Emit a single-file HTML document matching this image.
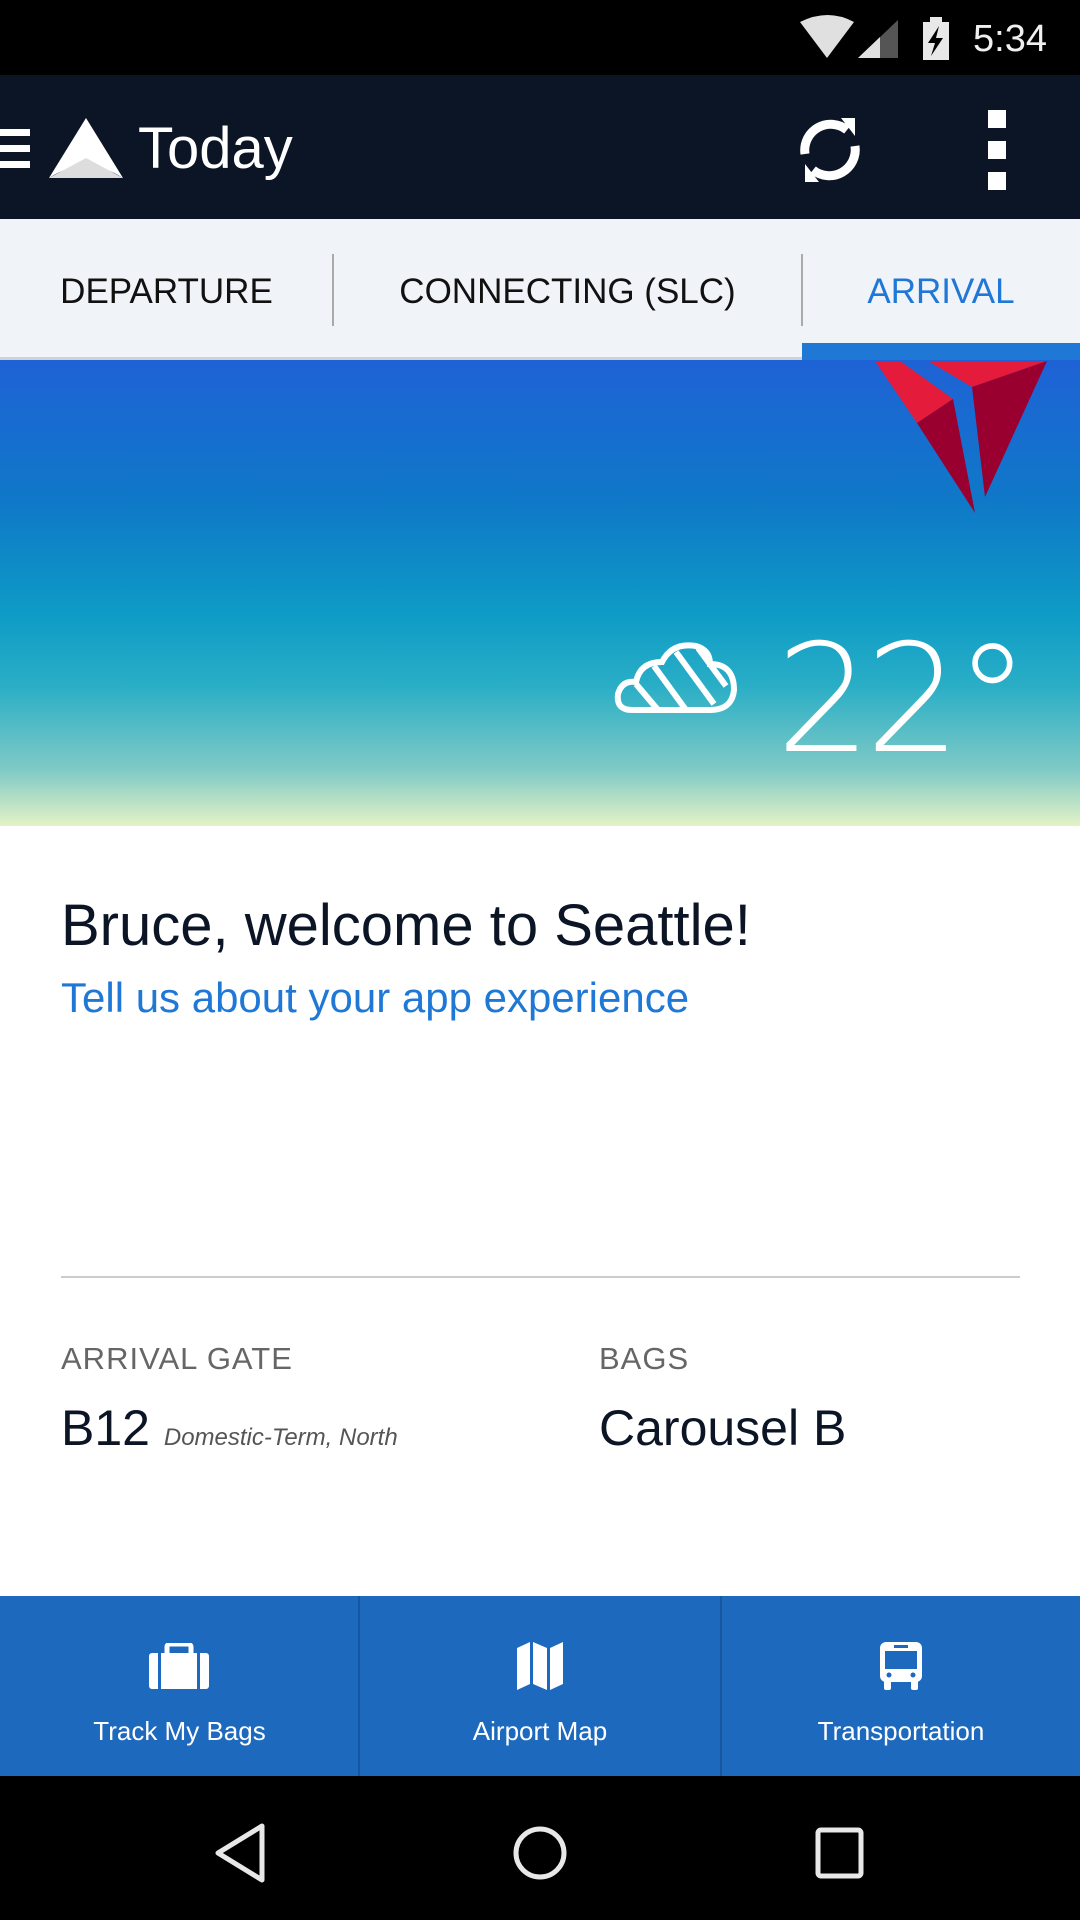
<!DOCTYPE html>
<html><head><meta charset="utf-8"><style>
*{margin:0;padding:0;box-sizing:border-box}
body{width:1080px;height:1920px;overflow:hidden;font-family:"Liberation Sans",sans-serif;background:#fff;position:relative}
.a{position:absolute}
</style></head><body>
<div class="a" style="left:0;top:0;width:1080px;height:75px;background:#000"></div>
<svg class="a" style="left:790px;top:14px" width="180" height="50" viewBox="0 0 180 50">
<path d="M10 8 Q38 -6 64 8 L37 44 Z" fill="#e0e0e0"/>
<path d="M68 44 L108 6 L108 44 Z" fill="#555"/><path d="M68 44 L90 23 L90 44Z" fill="#e0e0e0"/>
<rect x="133" y="8" width="26" height="38" fill="#e8e8e8"/><rect x="140" y="3" width="12" height="6" fill="#e8e8e8"/>
<path d="M149 12 L138 29 L145 29 L141 42 L153 24 L146 24 Z" fill="#000"/>
</svg>
<div class="a" style="left:973px;top:14px;font-size:38px;color:#f0f0f0;line-height:50px">5:34</div>

<div class="a" style="left:0;top:75px;width:1080px;height:144px;background:#0b1526"></div>
<div class="a" style="left:0;top:129px;width:30px;height:7px;background:#fff"></div>
<div class="a" style="left:0;top:145px;width:30px;height:7px;background:#fff"></div>
<div class="a" style="left:0;top:161px;width:30px;height:7px;background:#fff"></div>
<svg class="a" style="left:49px;top:118px" width="74" height="62" viewBox="0 0 74 62"><path d="M37 0 L74 60 Q37 36 0 60 Z" fill="#fff"/><path d="M37 40 L0 60 L74 60Z" fill="#ddd"/></svg>
<div class="a" style="left:138px;top:116px;font-size:58px;color:#fff;line-height:66px">Today</div>
<svg class="a" style="left:795px;top:112px" width="70" height="76" viewBox="0 0 70 76" fill="none" stroke="#fff" stroke-width="9">
<path d="M10 42 A26 26 0 0 1 52 18"/><path d="M60 34 A26 26 0 0 1 18 58"/>
<path d="M46 6 L60 6 L60 24 Z" fill="#fff" stroke="none"/><path d="M24 70 L10 70 L10 52Z" fill="#fff" stroke="none"/></svg>
<div class="a" style="left:988px;top:110px;width:18px;height:18px;background:#fff"></div>
<div class="a" style="left:988px;top:141px;width:18px;height:18px;background:#fff"></div>
<div class="a" style="left:988px;top:172px;width:18px;height:18px;background:#fff"></div>

<div class="a" style="left:0;top:219px;width:1080px;height:141px;background:#f0f3f8"></div>
<div class="a" style="left:0;top:357px;width:802px;height:3px;background:#cfd2d8"></div>
<div class="a" style="left:332px;top:254px;width:2px;height:72px;background:#aaa"></div>
<div class="a" style="left:801px;top:254px;width:2px;height:72px;background:#aaa"></div>
<div class="a" style="left:802px;top:343px;width:278px;height:17px;background:#1f78d6"></div>
<div class="a" style="left:0;top:270px;width:333px;text-align:center;font-size:35px;line-height:44px;color:#111">DEPARTURE</div>
<div class="a" style="left:333px;top:270px;width:469px;text-align:center;font-size:35px;line-height:44px;color:#111">CONNECTING (SLC)</div>
<div class="a" style="left:802px;top:270px;width:278px;text-align:center;font-size:35px;line-height:44px;color:#1f78d6">ARRIVAL</div>

<div class="a" style="left:0;top:360px;width:1080px;height:466px;background:linear-gradient(#1f62d6 0%,#0f78c8 30%,#0e9cc6 55%,#2aaec6 70%,#80cac6 88%,#e4f2c6 100%)"></div>
<svg class="a" style="left:0;top:0" width="1080" height="520" viewBox="0 0 1080 520">
<path d="M875 361 L900 361 L953 399 L917 423 Z" fill="#e41b3a"/>
<path d="M928 361 L1047 361 L972 387 Z" fill="#e41b3a"/>
<path d="M972 387 L1047 361 L985 497 Z" fill="#990030"/>
<path d="M917 423 L953 399 L975 513 Z" fill="#990030"/></svg>
<svg class="a" style="left:614px;top:640px" width="124" height="74" viewBox="0 0 124 74" fill="none" stroke="#fff" stroke-width="6">
<path d="M18 70 Q2 70 4 54 Q8 40 22 42 Q26 22 48 22 Q58 2 82 6 Q96 10 96 24 Q120 24 120 50 Q118 70 96 70 Z"/>
<path d="M22 44 L44 70 M40 26 L72 70 M62 12 L100 64 M84 8 L112 46" /></svg>
<div class="a" style="left:776px;top:620px;font-size:150px;color:#fff;line-height:160px;letter-spacing:-6px;font-family:'DejaVu Sans','Liberation Sans',sans-serif;font-weight:200">22°</div>

<div class="a" style="left:61px;top:891px;font-size:58px;color:#0b1526;line-height:70px">Bruce, welcome to Seattle!</div>
<div class="a" style="left:61px;top:974px;font-size:42px;color:#1f78d6;line-height:48px">Tell us about your app experience</div>
<div class="a" style="left:61px;top:1276px;width:959px;height:2px;background:#ccc"></div>
<div class="a" style="left:61px;top:1339px;font-size:31px;color:#666;line-height:40px;letter-spacing:1px">ARRIVAL GATE</div>
<div class="a" style="left:599px;top:1339px;font-size:31px;color:#666;line-height:40px;letter-spacing:1px">BAGS</div>
<div class="a" style="left:61px;top:1398px;font-size:50px;color:#0b1526;line-height:60px">B12 <span style="font-size:24px;font-style:italic;color:#555">Domestic-Term, North</span></div>
<div class="a" style="left:599px;top:1398px;font-size:50px;color:#0b1526;line-height:60px">Carousel B</div>

<div class="a" style="left:0;top:1596px;width:1080px;height:180px;background:#1c69bd"></div>
<div class="a" style="left:358px;top:1596px;width:2px;height:180px;background:#17579e"></div>
<div class="a" style="left:720px;top:1596px;width:2px;height:180px;background:#17579e"></div>
<svg class="a" style="left:149px;top:1643px" width="60" height="46" viewBox="0 0 60 46"><rect x="0" y="10" width="60" height="36" rx="3" fill="#fff"/><rect x="18" y="1" width="24" height="12" rx="3" fill="none" stroke="#fff" stroke-width="5"/><rect x="9" y="10" width="3" height="36" fill="#1c69bd"/><rect x="48" y="10" width="3" height="36" fill="#1c69bd"/></svg>
<svg class="a" style="left:517px;top:1642px" width="46" height="48" viewBox="0 0 46 48"><path d="M0 6 L13 0 L13 42 L0 48Z M16 0 L30 6 L30 48 L16 42Z M33 6 L46 0 L46 42 L33 48Z" fill="#fff"/></svg>
<svg class="a" style="left:880px;top:1642px" width="42" height="48" viewBox="0 0 42 48"><rect x="0" y="0" width="42" height="40" rx="6" fill="#fff"/><rect x="5" y="9" width="32" height="18" fill="#1c69bd"/><rect x="14" y="3" width="14" height="3" fill="#1c69bd"/><circle cx="9" cy="33" r="2.5" fill="#1c69bd"/><circle cx="33" cy="33" r="2.5" fill="#1c69bd"/><rect x="4" y="38" width="7" height="10" rx="2" fill="#fff"/><rect x="31" y="38" width="7" height="10" rx="2" fill="#fff"/></svg>
<div class="a" style="left:0;top:1714px;width:359px;text-align:center;font-size:26px;color:#fff;line-height:34px">Track My Bags</div>
<div class="a" style="left:360px;top:1714px;width:360px;text-align:center;font-size:26px;color:#fff;line-height:34px">Airport Map</div>
<div class="a" style="left:722px;top:1714px;width:358px;text-align:center;font-size:26px;color:#fff;line-height:34px">Transportation</div>

<div class="a" style="left:0;top:1776px;width:1080px;height:144px;background:#000"></div>
<svg class="a" style="left:0;top:1776px" width="1080" height="144" viewBox="0 0 1080 144" fill="none" stroke="#e8e8e8" stroke-width="5">
<path d="M262 50 L262 104 L218 77 Z" stroke-linejoin="round"/>
<circle cx="540" cy="77" r="24"/>
<rect x="818" y="54" width="43" height="46" rx="3"/></svg>
</body></html>
